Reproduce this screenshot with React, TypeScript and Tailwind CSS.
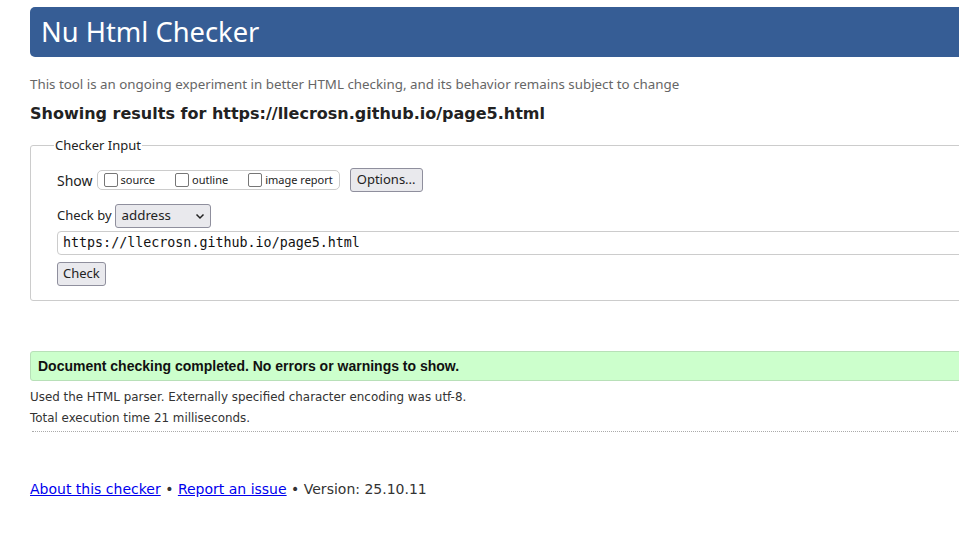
import React from "react";

export default function App() {
  return (
    <div className="w-[959px] h-[553px] overflow-hidden bg-white">
      <div className="w-[1200px] pl-[30px] pt-[7px]">
        <div className="h-[50px] rounded-l-[5px] bg-[#365d95] flex items-center pl-[11px]">
          <h1 className="text-white text-[27.3px] leading-none font-['Noto_Sans',sans-serif] pb-[1px]">Nu Html Checker</h1>
        </div>
        <p className="mt-[18px] text-[13.33px] leading-[18px] text-[#666] font-['Noto_Sans',sans-serif]">
          This tool is an ongoing experiment in better HTML checking, and its behavior remains subject to change
        </p>
        <h2 className="mt-[11px] text-[16px] leading-[20px] font-bold text-[#222] font-['DejaVu_Sans',sans-serif]">
          Showing results for https://llecrosn.github.io/page5.html
        </h2>
        <fieldset className="mt-[13px] border border-[#ccc] rounded-[3px] pl-[26px] pb-[14px] pt-[6px] font-['Noto_Sans',sans-serif]">
          <legend className="ml-[-3px] px-[1px] text-[13px] leading-[16px] text-[#222]">Checker Input</legend>
          <div className="flex items-center mt-[9px] h-[24px]">
            <span className="text-[14px] text-[#222] mr-[4px]">Show</span>
            <div className="flex items-center h-[20px] border border-[#ccc] rounded-[5px] pl-[6px] pr-[6px]">
              <label className="flex items-center text-[11px] text-[#222] mr-[20px]">
                <span className="w-[14px] h-[14px] border border-[#767676] rounded-[2px] mr-[3px] mb-[1px]" />
                source
              </label>
              <label className="flex items-center text-[11px] text-[#222] mr-[20px]">
                <span className="w-[14px] h-[14px] border border-[#767676] rounded-[2px] mr-[3px] mb-[1px]" />
                outline
              </label>
              <label className="flex items-center text-[11px] text-[#222]">
                <span className="w-[14px] h-[14px] border border-[#767676] rounded-[2px] mr-[3px] mb-[1px]" />
                image report
              </label>
            </div>
            <button className="ml-[10px] h-[24px] px-[6px] text-[13px] text-[#222] bg-[#e9e9ed] border border-[#8f8f9d] rounded-[3px]">Options...</button>
          </div>
          <div className="flex items-center mt-[12px] h-[24px]">
            <span className="text-[13px] text-[#222] mr-[3px]">Check by</span>
            <div className="w-[96px] h-[24px] bg-[#e9e9ed] border border-[#8f8f9d] rounded-[3px] flex items-center justify-between pl-[6px] pr-[5px]">
              <span className="text-[13.33px] text-[#222]">address</span>
              <svg width="10" height="7" viewBox="0 0 10 7"><path d="M1.5 1.5 L5 5 L8.5 1.5" fill="none" stroke="#222" strokeWidth="1.5" /></svg>
            </div>
          </div>
          <div className="mt-[3px] h-[24px] border border-[#ccc] rounded-l-[4px] flex items-center pl-[5px]">
            <span className="text-[13.33px] text-[#111] font-['DejaVu_Sans_Mono',monospace]">https://llecrosn.github.io/page5.html</span>
          </div>
          <button className="mt-[7px] h-[24px] px-[5px] text-[13px] text-[#222] bg-[#e9e9ed] border border-[#8f8f9d] rounded-[3px]">Check</button>
        </fieldset>
        <div className="mt-[50px] h-[30px] bg-[#ccffcc] border border-[#b8e0b8] rounded-l-[3px] flex items-center pl-[7px]">
          <span className="text-[14px] font-bold text-[#111] font-['Liberation_Sans',sans-serif]">Document checking completed. No errors or warnings to show.</span>
        </div>
        <p className="mt-[6px] text-[11.9px] leading-[21px] text-[#333] font-['DejaVu_Sans',sans-serif]">Used the HTML parser. Externally specified character encoding was utf-8.</p>
        <p className="text-[11.9px] leading-[21px] text-[#333] font-['DejaVu_Sans',sans-serif]">Total execution time 21 milliseconds.</p>
        <div className="mt-[2px] ml-[2px] border-t border-dotted border-[#aaa]" />
        <p className="mt-[47px] text-[14px] leading-[20px] text-[#333] font-['DejaVu_Sans',sans-serif]">
          <a className="text-[#0000ee] underline" href="#">About this checker</a> • <a className="text-[#0000ee] underline" href="#">Report an issue</a> • Version: 25.10.11
        </p>
      </div>
    </div>
  );
}
